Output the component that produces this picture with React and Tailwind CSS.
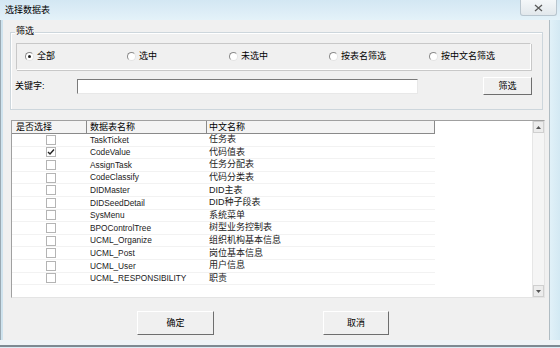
import { useState } from 'react';

const font = { fontFamily: '"Liberation Sans", "Noto Sans CJK SC", sans-serif' };

const rows = [
  { name: 'TaskTicket', cn: '任务表', checked: false },
  { name: 'CodeValue', cn: '代码值表', checked: true },
  { name: 'AssignTask', cn: '任务分配表', checked: false },
  { name: 'CodeClassify', cn: '代码分类表', checked: false },
  { name: 'DIDMaster', cn: 'DID主表', checked: false },
  { name: 'DIDSeedDetail', cn: 'DID种子段表', checked: false },
  { name: 'SysMenu', cn: '系统菜单', checked: false },
  { name: 'BPOControlTree', cn: '树型业务控制表', checked: false },
  { name: 'UCML_Organize', cn: '组织机构基本信息', checked: false },
  { name: 'UCML_Post', cn: '岗位基本信息', checked: false },
  { name: 'UCML_User', cn: '用户信息', checked: false },
  { name: 'UCML_RESPONSIBILITY', cn: '职责', checked: false },
];

const radios = [
  { label: '全部', w: 'w-[102px]' },
  { label: '选中', w: 'w-[102px]' },
  { label: '未选中', w: 'w-[100px]' },
  { label: '按表名筛选', w: 'w-[100px]' },
  { label: '按中文名筛选', w: 'w-[100px]' },
];

function Radio({ on }) {
  return (
    <span className="w-[9px] h-[9px] rounded-full border border-[#8a8a8a] border-r-[#e4e4e4] border-b-[#e4e4e4] bg-white flex items-center justify-center">
      {on && <span className="w-[3px] h-[3px] rounded-full bg-[#202020]" />}
    </span>
  );
}

function Check({ on }) {
  return (
    <span className="w-[10px] h-[10px] border border-[#b4b4b4] bg-white flex items-center justify-center">
      {on && (
        <svg width="8" height="8" viewBox="0 0 8 8">
          <path d="M1 4 L3 6 L7 1.5" stroke="#222" strokeWidth="1.4" fill="none" />
        </svg>
      )}
    </span>
  );
}

function Button({ children, className }) {
  return (
    <div
      className={`bg-[#f0f0f0] border border-t-white border-l-white border-b-[#6e6e6e] border-r-[#6e6e6e] flex items-center justify-center text-[9px] leading-none text-black ${className}`}
    >
      {children}
    </div>
  );
}

export default function App() {
  const [selected] = useState(0);

  return (
    <div className="w-[560px] h-[348px] bg-[#dbecf5] flex flex-col overflow-hidden" style={font}>
      {/* Title bar */}
      <div className="h-[20px] flex items-start justify-between bg-gradient-to-b from-[#d3e7f3] to-[#e4f2f9]">
        <span className="text-[9px] text-black pl-[5px] pt-[6px] leading-none">选择数据表</span>
        <div className="w-[37px] h-[16px] mr-[3px] border border-[#b9c6cf] border-t-0 rounded-b-[3px] bg-gradient-to-b from-[#f4f7f9] to-[#e2e8ec] flex items-center justify-center">
          <svg width="9" height="8" viewBox="0 0 9 8">
            <path d="M1 1 L8 7 M8 1 L1 7" stroke="#5a5a5a" strokeWidth="1.3" fill="none" />
          </svg>
        </div>
      </div>

      <div className="flex flex-1">
        <div className="w-[3px] bg-[#cfe3ee] border-l border-[#9aa9b2]" />

        {/* Client area */}
        <div className="w-[547px] h-[320px] bg-[#f0f0f0] border-r border-[#b0bcc3] flex flex-col">
          {/* Group box */}
          <div className="relative ml-[7px] mt-[12px] w-[533px] h-[78px] border border-[#cdd6dc] shadow-[inset_1px_1px_0_#ffffff]">
            <span className="absolute left-[4px] top-[-6px] px-[1px] bg-[#f0f0f0] text-[9px] leading-none text-black">筛选</span>

            <div className="ml-[5px] mt-[10px] w-[515px] h-[27px] border border-[#c8c8c8] border-r-white border-b-white shadow-[1px_1px_0_#c8c8c8] flex items-center pl-[8px]">
              {radios.map((r, i) => (
                <div key={r.label} className={`flex items-center gap-[3px] ${r.w}`}>
                  <Radio on={i === selected} />
                  <span className="text-[9px] leading-none text-black">{r.label}</span>
                </div>
              ))}
            </div>

            <div className="flex items-center mt-[7px]">
              <span className="text-[9px] leading-none text-black pl-[4px] w-[66px]">关键字:</span>
              <div className="w-[341px] h-[15px] bg-white border border-[#7a7a7a] border-r-[#e8e8e8] border-b-[#e8e8e8]" />
              <Button className="ml-[65px] w-[49px] h-[18px]">筛选</Button>
            </div>
          </div>

          {/* List view */}
          <div className="ml-[8px] mt-[10px] w-[534px] h-[178px] bg-white border border-[#a0a0a0] border-r-[#e4e4e4] border-b-[#e4e4e4] flex">
            <div className="flex-1 flex flex-col">
              <div className="flex h-[13px] w-[423px] text-[9px] leading-none text-black border-b border-[#8a8a8a] bg-[#f4f4f4]">
                <div className="w-[75px] border-r border-[#8a8a8a] flex items-center pl-[4px]">是否选择</div>
                <div className="w-[120px] border-r border-[#8a8a8a] flex items-center pl-[3px]">数据表名称</div>
                <div className="flex-1 border-r border-[#8a8a8a] flex items-center pl-[2px]">中文名称</div>
              </div>
              {rows.map((r) => (
                <div key={r.name} className="flex h-[12.6px] w-[423px] items-center leading-none text-[#222] border-b border-[#f2f2f2]">
                  <div className="w-[75px] flex justify-center pl-[3px]">
                    <Check on={r.checked} />
                  </div>
                  <div className="w-[120px] pl-[3px] text-[8.3px]">{r.name}</div>
                  <div className="flex-1 pl-[2px] text-[9px]">{r.cn}</div>
                </div>
              ))}
            </div>

            {/* Scrollbar */}
            <div className="w-[12px] bg-[#f5f5f5] border-l border-[#e6e6e6] flex flex-col justify-between">
              <div className="h-[12px] bg-[#ececec] border border-[#cfcfcf] flex items-center justify-center">
                <svg width="5" height="3" viewBox="0 0 5 3"><path d="M0 3 L2.5 0 L5 3 Z" fill="#555" /></svg>
              </div>
              <div className="h-[12px] bg-[#ececec] border border-[#cfcfcf] flex items-center justify-center">
                <svg width="5" height="3" viewBox="0 0 5 3"><path d="M0 0 L2.5 3 L5 0 Z" fill="#555" /></svg>
              </div>
            </div>
          </div>

          {/* Buttons */}
          <div className="flex mt-[13px]">
            <Button className="ml-[134px] w-[77px] h-[24px]">确定</Button>
            <Button className="ml-[109px] w-[66px] h-[24px]">取消</Button>
          </div>
        </div>

        <div className="flex-1 bg-gradient-to-r from-[#e1f1f8] to-[#d3e9f3]" />
      </div>

      <div className="h-[8px] flex flex-col">
        <div className="h-[5px] bg-[#eef3f6]" />
        <div className="h-[2px] bg-[#7d8a92]" />
        <div className="flex-1 bg-[#dbecf5]" />
      </div>
    </div>
  );
}
